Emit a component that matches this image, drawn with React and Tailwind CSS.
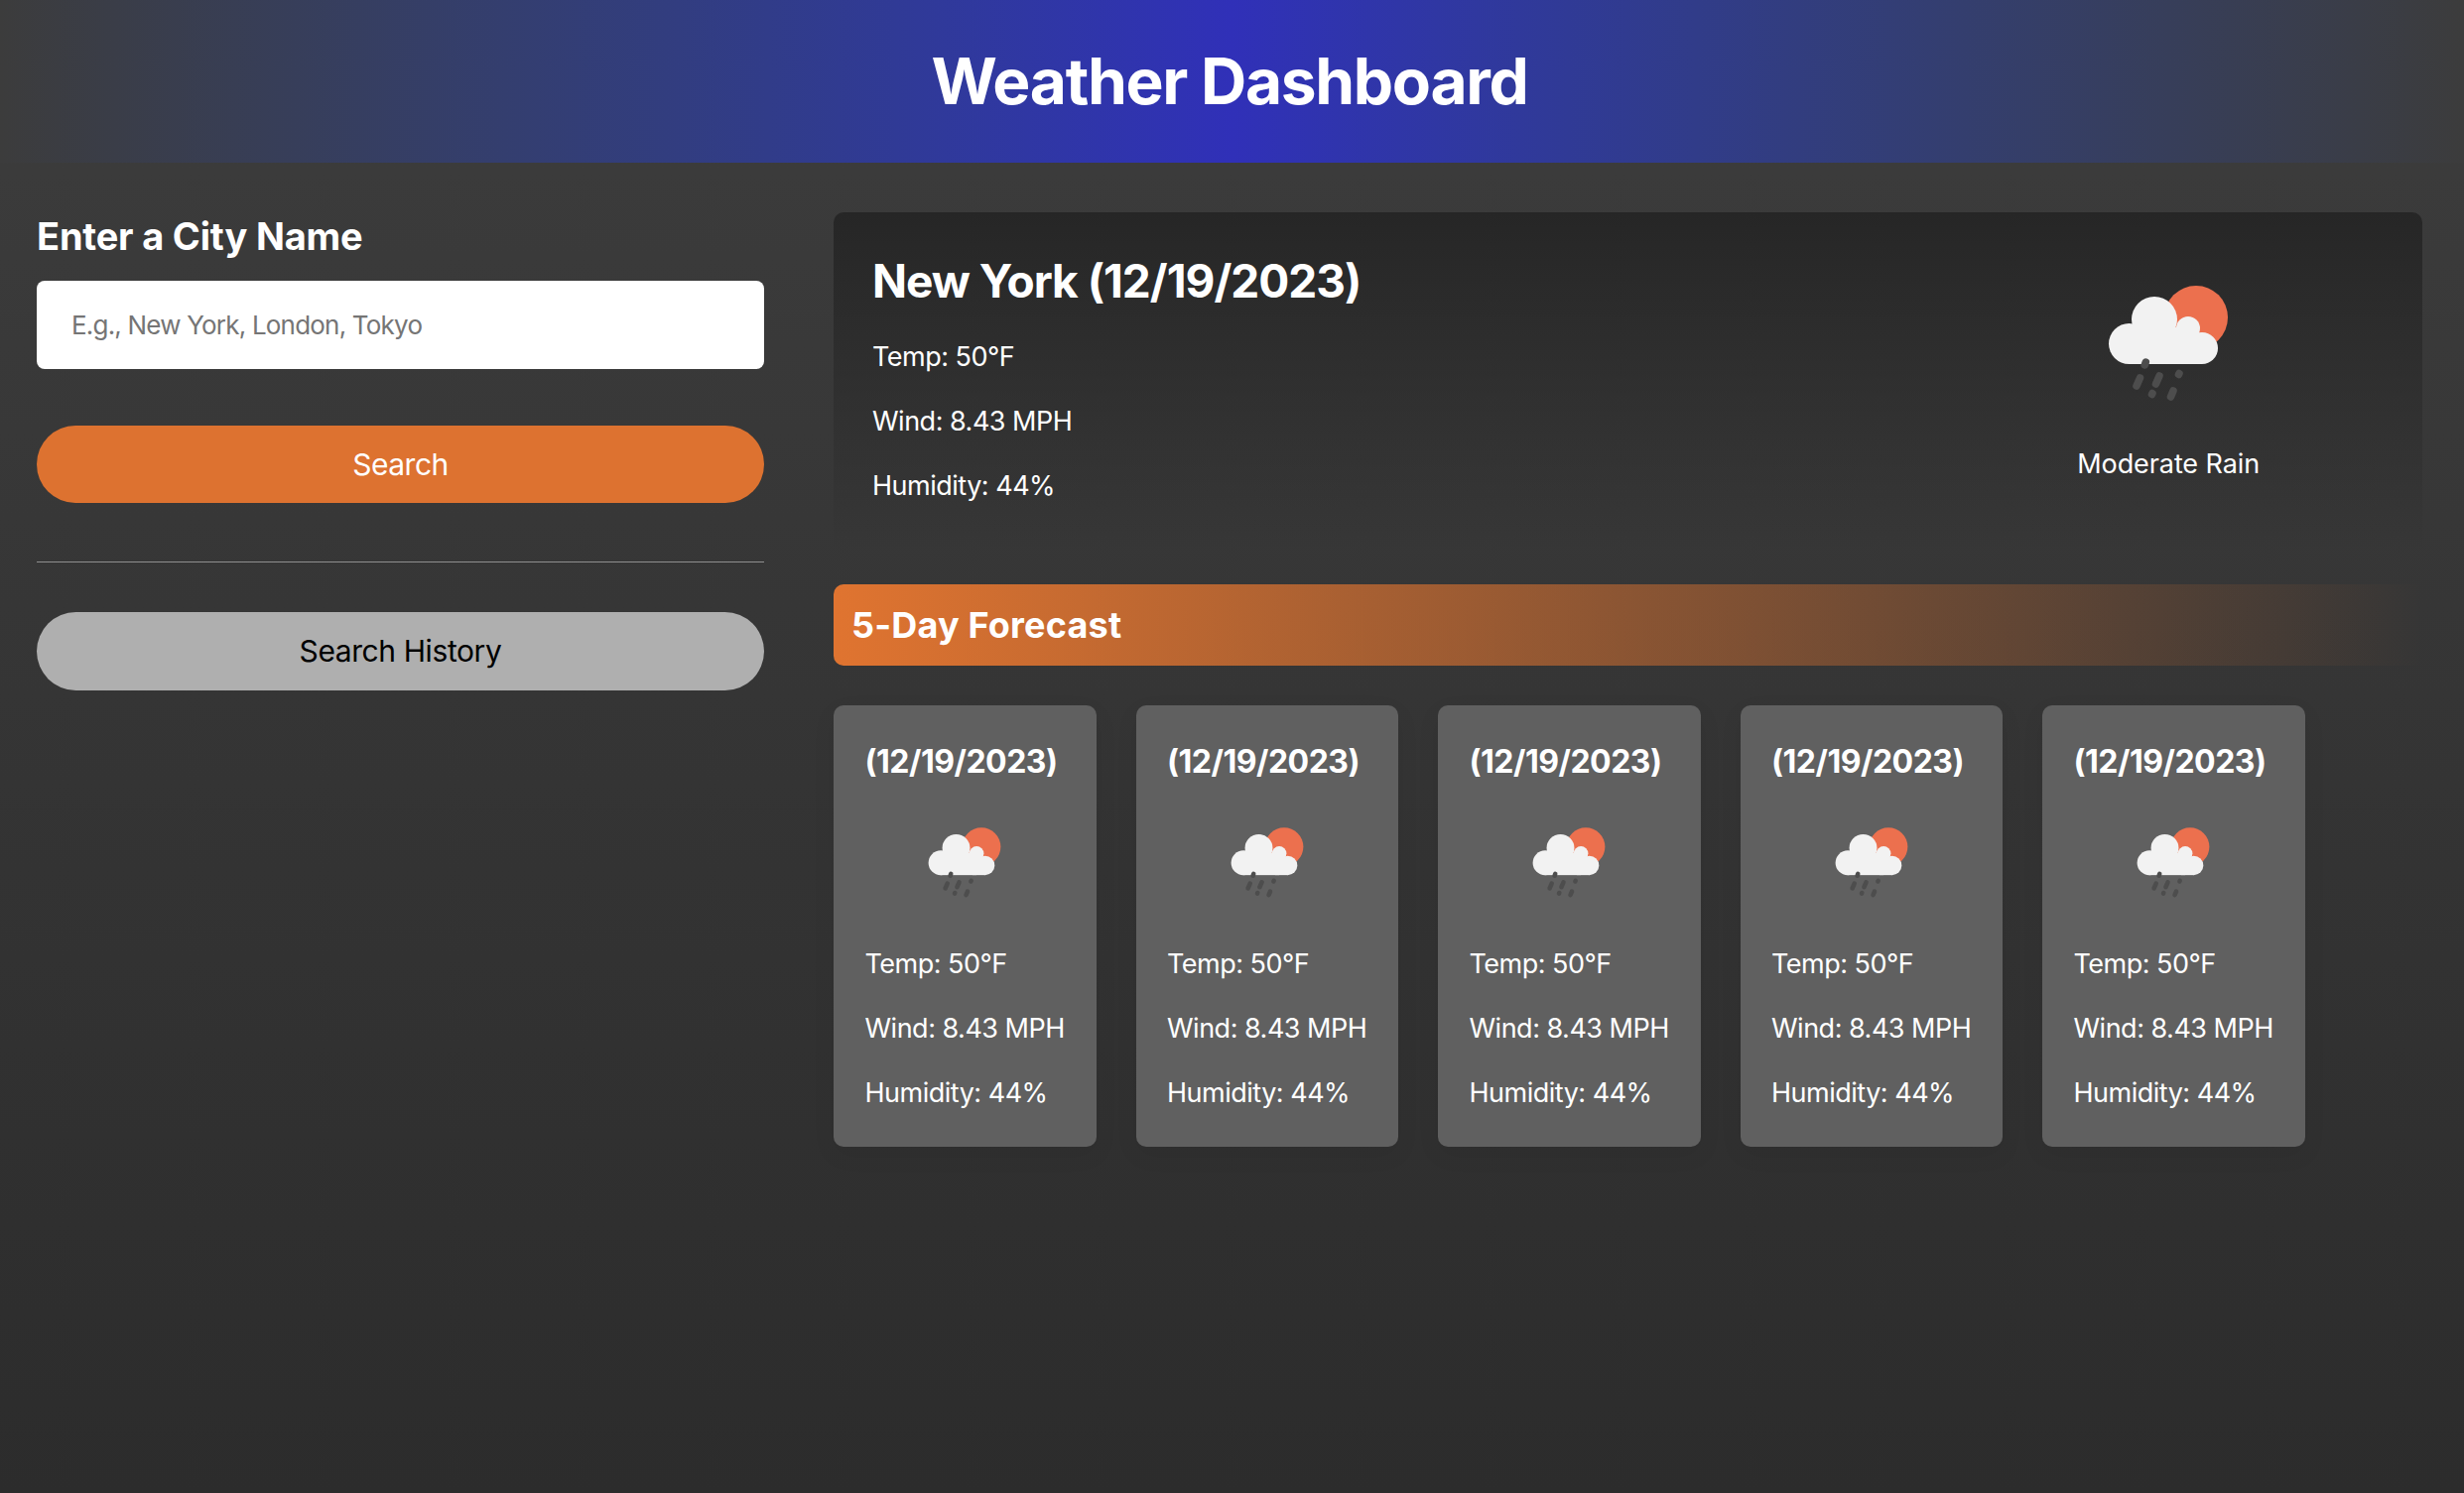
const font = { fontFamily: "Inter, 'Noto Sans', sans-serif" };

function RainIcon({ className }) {
  return (
    <svg viewBox="86 36 122 122" className={className}>
      <circle cx="175" cy="70" r="32" fill="#ec704e" />
      <g fill="#f2f2f2">
        <circle cx="107.500" cy="96.500" r="20.500" />
        <circle cx="133" cy="72" r="23" />
        <circle cx="167" cy="81" r="12" />
        <circle cx="181" cy="101" r="16" />
        <rect x="107" y="80" width="60" height="37" />
        <rect x="160" y="88" width="21" height="29" />
      </g>
      <g stroke="#4d4d4d" strokeWidth="7.500" strokeLinecap="round" fill="none">
        <path d="M124.300 115l-1 3" />
        <path d="M118.500 131l-3.500 8" />
        <path d="M138 129l-3.500 8" />
        <path d="M158 126.500l-.5 1" />
        <path d="M131 146.500l-.5 1" />
        <path d="M152 144l-2.500 6" />
      </g>
    </svg>
  );
}

function ForecastCard() {
  return (
    <div className="w-[264.500px] h-[445px] shrink-0 rounded-[10px] bg-[#606060] pl-[31.500px] pt-[35px] shadow-[0_8px_24px_rgba(0,0,0,0.06)]">
      <h4 className="text-[32px] leading-[44px] font-bold text-white tracking-[-0.5px]">(12/19/2023)</h4>
      <div className="flex justify-center -ml-[32px] mt-[43px] mb-[47px]">
        <RainIcon className="w-[74px] h-[74px]" />
      </div>
      <div className="flex flex-col gap-[29px] text-[27px] leading-9 text-white tracking-[-0.5px] whitespace-nowrap">
        <p>Temp: 50°F</p>
        <p>Wind: 8.43 MPH</p>
        <p>Humidity: 44%</p>
      </div>
    </div>
  );
}

export default function App() {
  return (
    <div style={font} className="min-h-screen bg-gradient-to-b from-[#3d3d3d] to-[#2c2c2c]">
      <header className="h-[164px] flex items-center justify-center pr-[5px] bg-gradient-to-r from-[#3c3c3c] via-[#3030b8] to-[#3c3c3c]">
        <h1 className="text-[64px] font-bold text-white tracking-[-1.300px] leading-none">Weather Dashboard</h1>
      </header>
      <div className="flex pt-[50px] pl-[37px] pr-[42px] gap-[70px]">
        <aside className="w-[733px] shrink-0">
          <h3 className="text-[38px] leading-[46px] font-bold text-white tracking-[-0.2px] pt-[1px]">Enter a City Name</h3>
          <input
            placeholder="E.g., New York, London, Tokyo"
            className="mt-[22px] w-full h-[89px] rounded-lg bg-white px-[35px] text-[26px] text-black tracking-[-0.8px] outline-none placeholder:text-[#757575]"
          />
          <button className="mt-[57px] w-full h-[78px] rounded-full bg-[#dd7230] text-[30px] text-white tracking-[-0.5px] block">Search</button>
          <hr className="mt-[59px] border-[#8e8e8e]" />
          <button className="mt-[50px] w-full h-[79px] rounded-full bg-[#afafaf] text-[30px] text-black tracking-[-0.4px] block">Search History</button>
        </aside>
        <main className="flex-1 min-w-0">
          <section className="h-[341px] rounded-t-[10px] bg-gradient-to-b from-[#262626] to-transparent pl-[39px] pr-[164px] flex justify-between">
            <div className="pt-[39px] text-white">
              <h2 className="text-[46px] leading-[60px] font-bold tracking-[-1px]">New York (12/19/2023)</h2>
              <div className="mt-[29px] flex flex-col gap-[29px] text-[27px] leading-9 tracking-[-0.5px]">
                <p>Temp: 50°F</p>
                <p>Wind: 8.43 MPH</p>
                <p>Humidity: 44%</p>
              </div>
            </div>
            <div className="pt-[72px] flex flex-col items-center text-white">
              <RainIcon className="w-[122px] h-[122px]" />
              <p className="mt-[42px] text-[27px] leading-9 tracking-[-0.1px]">Moderate Rain</p>
            </div>
          </section>
          <div className="mt-[34px] h-[82px] rounded-l-[10px] bg-gradient-to-r from-[#e07430] to-transparent flex items-center pl-[18px]">
            <h3 className="text-[36px] font-bold text-white tracking-[0.2px]">5-Day Forecast</h3>
          </div>
          <div className="mt-[40px] flex gap-[40px]">
            {[0, 1, 2, 3, 4].map((i) => (
              <ForecastCard key={i} />
            ))}
          </div>
        </main>
      </div>
    </div>
  );
}
